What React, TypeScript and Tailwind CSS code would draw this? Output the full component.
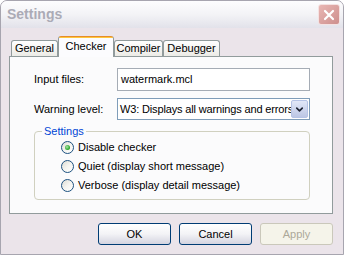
import { ChevronDown } from 'lucide-react';

const tabs = [
  { label: 'General', width: 'w-[47px]', active: false },
  { label: 'Checker', width: 'w-[56px]', active: true },
  { label: 'Compiler', width: 'w-[49px]', active: false },
  { label: 'Debugger', width: 'w-[57px]', active: false },
];

const options = [
  { label: 'Disable checker', checked: true },
  { label: 'Quiet (display short message)', checked: false },
  { label: 'Verbose (display detail message)', checked: false },
];

function Radio({ checked }: { checked: boolean }) {
  return (
    <span className="flex h-[13px] w-[13px] shrink-0 items-center justify-center rounded-full border border-[#1C5180] bg-gradient-to-br from-[#DCDBD3] via-[#F4F4F0] to-white">
      {checked && (
        <span className="h-[5px] w-[5px] rounded-full bg-[radial-gradient(circle_at_40%_40%,#A9E5A9,#21A121_70%)]" />
      )}
    </span>
  );
}

function Button({ label, disabled }: { label: string; disabled?: boolean }) {
  if (disabled) {
    return (
      <div className="flex h-[22px] w-[73px] items-center justify-center rounded-[3px] border border-[#CAC8BB] bg-[#F5F4EA] text-[#ACA899]">
        {label}
      </div>
    );
  }
  return (
    <div className="flex h-[22px] w-[73px] items-center justify-center rounded-[3px] border border-[#003C74] bg-gradient-to-b from-white via-[#F3F3F6] to-[#D4D4E0] text-black">
      {label}
    </div>
  );
}

export default function App() {
  return (
    <div className="h-[255px] w-[344px] overflow-hidden bg-white font-['Liberation_Sans',Arial,sans-serif] text-[11px] text-black">
      <div className="flex h-full flex-col rounded-t-[7px] border border-[#A7A5AF] bg-[#EBE4EA]">
        <div className="flex h-[27px] shrink-0 items-center justify-between rounded-t-[6px] bg-gradient-to-b from-[#FDFDFE] via-[#F3F3F6] to-[#E2E2EA] pl-[6px] pr-[3px]">
          <span className="text-[14px] font-bold text-[#ABABB6]">Settings</span>
          <span className="flex h-[21px] w-[22px] items-center justify-center rounded-[3px] border border-[#F4E2E2] bg-gradient-to-br from-[#E9B7B4] to-[#CD8F8D]">
            <svg width="12" height="12" viewBox="0 0 12 12">
              <path d="M2 2 L10 10 M10 2 L2 10" stroke="white" strokeWidth="2.2" strokeLinecap="round" />
            </svg>
          </span>
        </div>

        <div className="flex flex-1 flex-col pl-[8px] pr-[10px] pt-[8px]">
          <div className="flex h-[20px] items-end pl-[2px]">
            {tabs.map((tab) =>
              tab.active ? (
                <div
                  key={tab.label}
                  className={`relative z-10 -mb-px flex h-[21px] ${tab.width} flex-col rounded-t-[3px] border-x border-[#919B9C] bg-[#FCFCFE]`}
                >
                  <div className="h-[3px] rounded-t-[3px] border-t border-[#E68B2C] bg-[#FFC83C]" />
                  <div className="flex flex-1 items-center justify-center pb-[3px]">{tab.label}</div>
                </div>
              ) : (
                <div
                  key={tab.label}
                  className={`flex h-[16px] ${tab.width} items-center justify-center rounded-t-[3px] border-x border-t border-[#919B9C] bg-gradient-to-b from-white to-[#ECEBE6]`}
                >
                  {tab.label}
                </div>
              ),
            )}
          </div>

          <div className="flex h-[158px] flex-col border border-[#919B9C] bg-[#FBFBFC] pl-[24px] pt-[11px]">
            <div className="flex h-[23px] items-center">
              <span className="w-[83px]">Input files:</span>
              <div className="flex h-[23px] w-[193px] items-center border border-[#A5ACB5] bg-white pl-[3px]">
                watermark.mcl
              </div>
            </div>
            <div className="mt-[7px] flex h-[22px] items-center">
              <span className="w-[83px]">Warning level:</span>
              <div className="flex h-[22px] w-[193px] items-center border border-[#7F9DB9] bg-white">
                <span className="flex-1 overflow-hidden whitespace-nowrap pl-[2px] tracking-[-0.15px]">
                  W3: Displays all warnings and errors
                </span>
                <span className="mr-px flex h-[18px] w-[17px] shrink-0 items-center justify-center rounded-[2px] border border-[#B5C3E6] bg-gradient-to-b from-[#E2E8F8] to-[#BCC6E4]">
                  <ChevronDown size={11} strokeWidth={3.5} color="#1E2433" />
                </span>
              </div>
            </div>

            <fieldset className="mt-[5px] w-[276px] rounded-[4px] border border-[#D0D0BF] pb-[4px] pl-[26px]">
              <legend className="-ml-[19px] px-[2px] leading-[13px] text-[#0046D5]">Settings</legend>
              {options.map((opt) => (
                <div key={opt.label} className="flex h-[19px] items-center gap-[4px]">
                  <Radio checked={opt.checked} />
                  <span>{opt.label}</span>
                </div>
              ))}
            </fieldset>
          </div>

          <div className="mt-[9px] flex justify-end gap-[8px]">
            <Button label="OK" />
            <Button label="Cancel" />
            <Button label="Apply" disabled />
          </div>
        </div>
      </div>
    </div>
  );
}
